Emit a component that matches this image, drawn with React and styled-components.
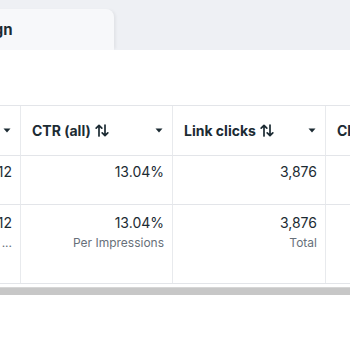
import React from "react";
import styled, { createGlobalStyle } from "styled-components";

const Global = createGlobalStyle`
  html, body { margin: 0; padding: 0; background: #ffffff; }
  body { font-family: Inter, "Noto Sans", "Liberation Sans", sans-serif; color: #1c2b33; }
  * { box-sizing: border-box; }
`;

const Page = styled.div`
  width: 350px;
  height: 350px;
  overflow: hidden;
  display: flex;
  flex-direction: column;
`;

const TabBar = styled.div`
  height: 50px;
  background: #eef0f4;
  display: flex;
  align-items: flex-end;
  overflow: hidden;
`;

const Tab = styled.div`
  width: 197px;
  height: 41px;
  margin-left: -83px;
  padding-left: 21px;
  background: #f7f8fa;
  border-radius: 0 8px 0 0;
  display: flex;
  align-items: center;
  font-size: 15px;
  font-weight: 700;
  color: #1c2b33;
  box-shadow: 3px 0 3px -1px rgba(0, 0, 0, 0.05);
`;

const Spacer = styled.div`
  height: 55px;
`;

const Grid = styled.div`
  display: grid;
  grid-template-columns: 21px 152px 153px 152px;
  border-top: 1px solid #e3e5e9;
  border-bottom: 1px solid #e3e5e9;
  overflow: hidden;
`;

const Cell = styled.div`
  height: ${(p) => p.$h}px;
  border-right: 1px solid #e8eaed;
  border-bottom: ${(p) => (p.$last ? "none" : "1px solid #e3e5e9")};
  padding: ${(p) => (p.$head ? "0 9px 0 11px" : `${p.$top}px 8px 0 8px`)};
  display: flex;
  flex-direction: ${(p) => (p.$head ? "row" : "column")};
  align-items: ${(p) => (p.$head ? "center" : "flex-end")};
  justify-content: ${(p) => (p.$head ? "space-between" : "flex-start")};
  white-space: nowrap;
  overflow: hidden;
`;

const EdgeCell = styled(Cell)`
  padding: ${(p) => (p.$head ? "0 9px 0 0" : `${p.$top}px 8px 0 0`)};
  justify-content: ${(p) => (p.$head ? "flex-end" : "flex-start")};
  overflow: visible;
`;

const HeadLabel = styled.span`
  font-size: 14px;
  font-weight: 700;
  color: #1c2b33;
  display: flex;
  align-items: center;
  gap: 4px;
`;

const Value = styled.span`
  font-size: 14px;
  line-height: 20px;
  color: #1c2b33;
`;

const Sub = styled.span`
  font-size: 12px;
  line-height: 16px;
  margin-top: 2px;
  color: #67707a;
`;

const Scrollbar = styled.div`
  height: 8px;
  margin-top: 3px;
  background: #c7c7c7;
  border-top: 1px solid #d6d6d6;
`;

const Caret = () => (
  <svg width="8" height="5" viewBox="0 0 8 5">
    <path d="M0.5 0.5 H7.5 L4 4.5 Z" fill="#1c2b33" />
  </svg>
);

const SortArrows = () => (
  <svg width="14" height="13" viewBox="0 0 14 13" fill="none" stroke="#1c2b33" strokeWidth="1.7" strokeLinecap="round" strokeLinejoin="round">
    <path d="M4 12 V1.5 M1.2 4.2 L4 1.3 L6.8 4.2" />
    <path d="M10 1 V11.5 M7.2 8.8 L10 11.7 L12.8 8.8" />
  </svg>
);

const columns = [
  { label: "CTR (all)", value: "13.04%", sub: "Per Impressions" },
  { label: "Link clicks", value: "3,876", sub: "Total" },
  { label: "Clicks (all)", value: "", sub: "" },
];

export default function App() {
  return (
    <Page>
      <Global />
      <TabBar>
        <Tab>Campaign</Tab>
      </TabBar>
      <Spacer />
      <Grid>
        <EdgeCell $head $h={50}>
          <Caret />
        </EdgeCell>
        {columns.map((c) => (
          <Cell key={c.label} $head $h={50}>
            <HeadLabel>
              {c.label}
              <SortArrows />
            </HeadLabel>
            <Caret />
          </Cell>
        ))}

        <EdgeCell $h={49} $top={6}>
          <Value>12</Value>
        </EdgeCell>
        {columns.map((c) => (
          <Cell key={c.label + "r1"} $h={49} $top={6}>
            <Value>{c.value}</Value>
          </Cell>
        ))}

        <EdgeCell $h={78} $top={8} $last>
          <Value>12</Value>
          <Sub>...</Sub>
        </EdgeCell>
        {columns.map((c) => (
          <Cell key={c.label + "r2"} $h={78} $top={8} $last>
            <Value>{c.value}</Value>
            <Sub>{c.sub}</Sub>
          </Cell>
        ))}
      </Grid>
      <Scrollbar />
    </Page>
  );
}
